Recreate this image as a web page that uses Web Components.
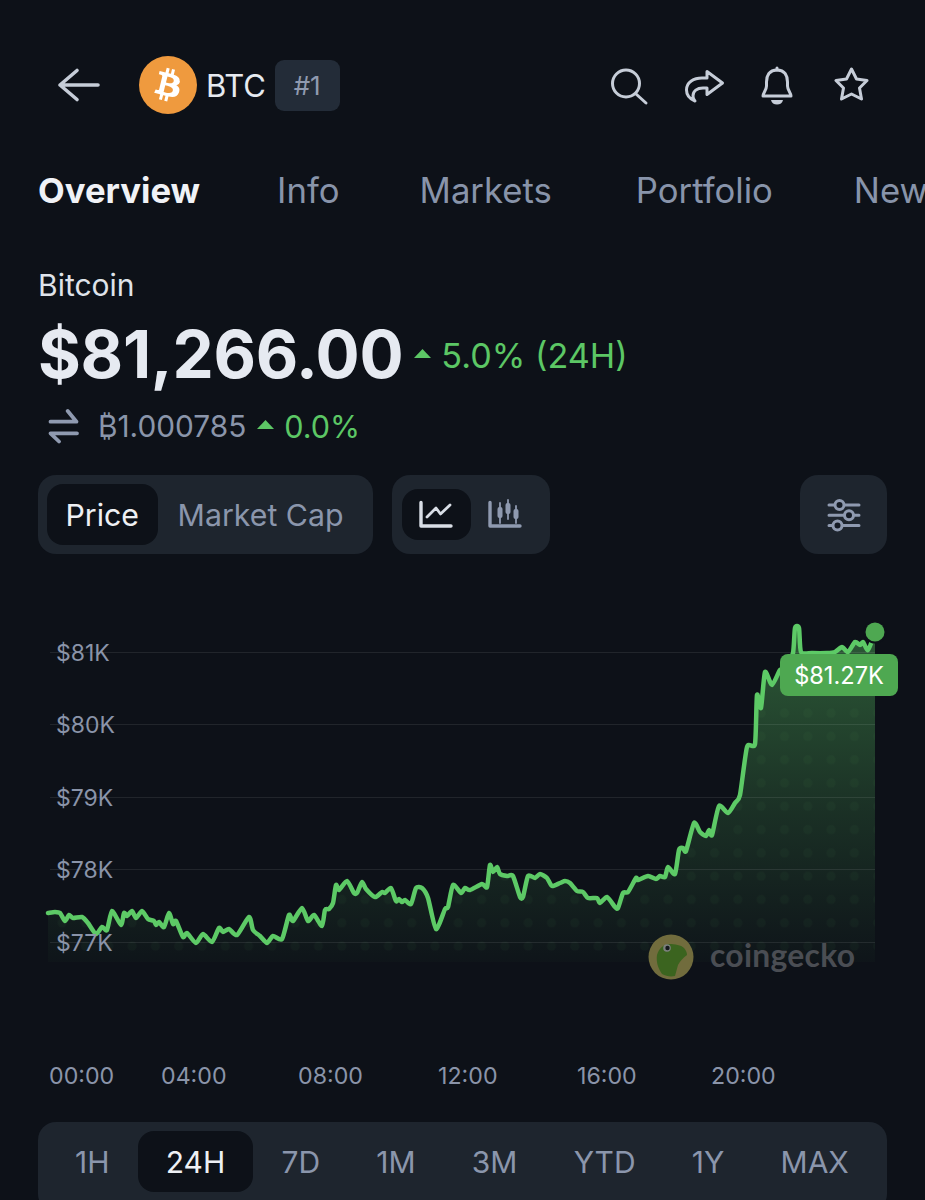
<!DOCTYPE html>
<html lang="en"><head><meta charset="utf-8"><title>BTC</title>
<style>
html,body{margin:0;padding:0;background:#0d1118;height:1200px;overflow:hidden}
body{font-family:Inter,"Liberation Sans",sans-serif;color:#e6eaf0}
</style></head><body>
<btc-page></btc-page>
<script>
const def=(name,html)=>{customElements.define(name,class extends HTMLElement{
  constructor(){super();this.attachShadow({mode:'open'}).innerHTML=html}
})};
def('coin-header',`<style>
:host{display:flex;align-items:center;height:60px;margin-top:55px;position:relative;box-sizing:border-box;font-family:Inter,"Liberation Sans",sans-serif}
svg{display:block;flex:none}
.st{stroke:#c6cdd8;fill:none;stroke-width:3;stroke-linecap:round;stroke-linejoin:round}
.sym{font-size:31px;color:#e6eaf0;margin-left:8px;letter-spacing:-.2px}
.rank{margin-left:9px;width:65px;height:51px;border-radius:9px;background:#232c38;color:#8f9ab0;font-size:26px;display:flex;align-items:center;justify-content:center}
.r{margin-left:auto;margin-right:55px;display:flex;align-items:center}
</style>
<svg style="margin-left:56px" width="46" height="36" viewBox="56 67 46 36"><path class="st" style="stroke-width:3.6" d="M98 85H60M77 70.5 60 85l17 14.5"/></svg>
<svg style="margin-left:36px" width="60" height="60" viewBox="0 0 60 60"><circle cx="30" cy="30" r="29" fill="#ef9a3e"/><g transform="translate(3.8 3.8) scale(.82)"><path fill="#fff" d="M46.1 27.4c.6-4.3-2.6-6.6-7.1-8.1l1.5-5.9-3.6-.9-1.4 5.7c-.9-.2-1.9-.5-2.9-.7l1.4-5.8-3.6-.9-1.5 5.9c-.8-.2-1.5-.3-2.2-.5l-5-1.2-.9 3.8s2.6.6 2.6.6c1.4.4 1.7 1.3 1.6 2l-1.6 6.6-2.3 9.3c-.2.4-.6 1-1.6.8 0 0-2.6-.7-2.6-.7l-1.8 4.1 4.7 1.2c.9.2 1.7.4 2.6.7l-1.5 6 3.6.9 1.5-5.9c1 .3 1.9.5 2.9.8l-1.5 5.9 3.6.9 1.5-6c6.2 1.2 10.9.7 12.8-4.9 1.6-4.5-.1-7.1-3.3-8.8 2.4-.5 4.2-2.1 4.6-5.3zM37.8 39c-1.1 4.5-8.7 2.1-11.2 1.4l2-8c2.5.6 10.4 1.9 9.2 6.6zm1.1-11.7c-1 4.1-7.3 2-9.4 1.5l1.8-7.3c2.1.5 8.7 1.5 7.6 5.8z"/></g></svg>
<span class="sym">BTC</span><span class="rank">#1</span>
<div class="r">
<svg width="44" height="44" viewBox="607 62 44 44"><circle class="st" cx="626" cy="82.5" r="13.5"/><path class="st" d="M636 93l10 9"/></svg>
<svg style="margin-left:31px" width="44" height="44" viewBox="682 62 44 44"><path class="st" d="M707 70.5 722.5 82 707 93.5V87h-4c-6 0-10 3-10 8 0 2 1 4 2 5-5-2-8.500-6-8.500-11 0-8 7.500-12 15.500-12h5z"/></svg>
<svg style="margin-left:34px" width="34" height="44" viewBox="760 62 34 44"><path class="st" d="M777 69c-8 0-10.500 6-10.500 12v4c0 4-3.500 7-3.500 10h28c0-3-3.500-6-3.500-10v-4c0-6-2.500-12-10.500-12z"/><path class="st" d="M777 67v2"/><path d="M771 99h12c-.5 3-3 4.500-6 4.500s-5.500-1.500-6-4.500z" fill="#c6cdd8"/></svg>
<svg style="margin-left:40px" width="36" height="44" viewBox="834 64 36 44"><path class="st" d="M851.500 70l5 10 10.500 1.500-7.500 7.500 2 11-10-5-10 5 2-11-7.500-7.500 10.500-1.500z"/></svg>
</div>`);
def('coin-tabs',`<style>
:host{display:flex;margin-top:46px;height:58px;align-items:center;overflow:hidden;padding-left:38px;font-size:34.700px;color:#8894aa;white-space:nowrap;font-family:Inter,"Liberation Sans",sans-serif}
b{color:#f0f2f6;font-weight:700;margin-right:77px;flex:none}
span{flex:none}
</style><b>Overview</b><span style="margin-right:80px">Info</span><span style="margin-right:84px">Markets</span><span style="margin-right:81px">Portfolio</span><span>News</span>`);
def('price-block',`<style>
:host{display:block;padding:0 0 0 38px;font-family:Inter,"Liberation Sans",sans-serif}
.name{font-size:30px;line-height:36px;margin-top:48px;color:#dfe3ea}
.row{display:flex;align-items:center}
.top{margin-top:15px}
.p{font-size:65.500px;font-weight:700;line-height:74px;color:#e6eaf1;letter-spacing:-.3px}
.g{color:#5cc765;font-size:34.200px}
.tri{display:block;flex:none}
.sub{margin-top:12px;height:44px}
.sub .v{color:#8a95aa;margin-left:19px;font-size:29.800px}
.sub .g{font-size:30.600px;margin-left:10px}
</style>
<div class="name">Bitcoin</div>
<div class="row top"><span class="p">$81,266.00</span>
<svg class="tri" style="margin:0 10px 3px 11px" width="17" height="9" viewBox="0 0 17 9"><path d="M8.500 0 17 9H0z" fill="#5cc765"/></svg><span class="g">5.0% (24H)</span></div>
<div class="row sub"><svg style="margin-left:10px" width="31" height="36" viewBox="47 408 31 36"><path d="M49.500 421.700H75.500L66.700 411M76 433.300H49.500L58 441.500" fill="none" stroke="#8f9ab0" stroke-width="3.800" stroke-linecap="round" stroke-linejoin="round"/></svg>
<span class="v">₿1.000785</span><svg class="tri" style="margin:0 0 3px 11px" width="17" height="9" viewBox="0 0 17 9"><path d="M8.500 0 17 9H0z" fill="#5cc765"/></svg><span class="g">0.0%</span></div>`);
def('seg-group',`<style>
:host{display:flex;align-items:center;height:79px;box-sizing:border-box;border-radius:18px;background:#1e252e;padding:0 9px}
</style><slot></slot>`);
def('seg-item',`<style>
:host{display:flex;align-items:center;justify-content:center;height:61px;border-radius:16px;color:#8b96ac;font-size:var(--f,30px);padding:0 20px;white-space:nowrap;font-family:Inter,"Liberation Sans",sans-serif}
:host([on]){background:#0d1118;color:#eef0f4}
</style><slot></slot>`);
def('chart-controls',`<style>
:host{display:flex;margin-top:27px;padding:0 38px;gap:19px;--f:30.300px;font-family:Inter,"Liberation Sans",sans-serif}
.ic{height:51px;width:69px;padding:0}
.pr{padding:0 19px 0 18.500px}
.mc{padding:0 20px 0 19.500px}
.g2{padding:0 10px}
.spacer{flex:1}
.m{width:87px;padding:0;justify-content:center}
svg{display:block}
</style>
<seg-group><seg-item on class="pr">Price</seg-item><seg-item class="mc">Market Cap</seg-item></seg-group>
<seg-group class="g2"><seg-item on class="ic"><svg width="40" height="36" viewBox="416 498 40 36"><path d="M421 503.500V527H451" fill="none" stroke="#d9dee6" stroke-width="3.400" stroke-linecap="round" stroke-linejoin="round"/><path d="M427 518 436 509 440.500 515 450 506" fill="none" stroke="#d9dee6" stroke-width="2.800" stroke-linecap="round" stroke-linejoin="round"/></svg></seg-item>
<seg-item class="ic"><svg width="40" height="36" viewBox="486 498 40 36"><path d="M491 503.500V527H521" fill="none" stroke="#8f9ab0" stroke-width="3.400" stroke-linecap="round" stroke-linejoin="round"/><path d="M501 504V524M509 501V520M517 507V524" stroke="#8f9ab0" stroke-width="1.800" stroke-linecap="round"/><rect x="498.500" y="508" width="5" height="11" rx="2" fill="#8f9ab0"/><rect x="506.500" y="504" width="5" height="11" rx="2" fill="#8f9ab0"/><rect x="514.500" y="510" width="5" height="10" rx="2" fill="#8f9ab0"/></svg></seg-item></seg-group>
<div class="spacer"></div>
<seg-group class="m"><svg width="36" height="36" viewBox="826 496 36 36"><g stroke="#8f9ab0" stroke-width="3" stroke-linecap="round" fill="#1e252e"><path d="M829 504H859M829 514.300H859M829 524.500H859"/><circle cx="839.500" cy="504" r="4.500" fill="#141a24"/><circle cx="849" cy="514.300" r="4.500" fill="#141a24"/><circle cx="837.500" cy="524.500" r="4.500" fill="#141a24"/></g></svg></seg-group>`);
const pts="48,913 55,912 60,913 65,921 69,915 73,918 82,917 88,923 96,934 102,927 107,930 112,911 121,925 124,913 127,916 132,911 136,918 142,911 148,919 154,921 156,925 159,922 164,927 169,913 173,924 176,921 183,937 187,933 196,943 203,934 212,942 219,928 223,932 229,929 237,935 249,917 253,930 260,936 267,943 273,936 282,939 289,915 293,921 302,908 308,921 314,915 322,926 325,910 329,909 333,903 336,885 339,890 347,881 354,893 357,893 362,882 366,889 375,897 382,892 385,893 391,888 396,901 399,899 402,902 405,900 411,904 416,888 422,888 428,898 436,929 445,909 448,907 453,885 461,893 465,888 470,890 482,884 487,887 490,865 493,872 497,867 500,874 507,876 513,876 520,897 523,897 528,876 535,878 540,874 547,878 552,886 560,883 565,881 570,883 577,891 583,892 588,898 597,898 600,903 607,897 615,907 618,908 623,893 628,892 636,878 638,880 648,876 656,879 660,876 665,877 668,867 675,874 679,850 683,848 686,851 694,823 700,832 706,836 709,830 712,835 719,806 728,813 735,803 740,795 747,747 755,744 757,695 761,708 765,672 772,685 780,670 786,668 793,653 795,628 799,628 801,652 812,653 827,653 835,652 842,647 848,652 855,642 860,645 863,642 868,650 875,633";
const P=pts.split(' ').map(s=>s.split(',').map(Number));
let smooth=`M${P[0][0]} ${P[0][1]}`;
for(let i=0;i<P.length-1;i++){const a=P[Math.max(i-1,0)],b=P[i],c=P[i+1],d=P[Math.min(i+2,P.length-1)],t=.11;
  smooth+=`C${(b[0]+(c[0]-a[0])*t).toFixed(1)} ${(b[1]+(c[1]-a[1])*t).toFixed(1)} ${(c[0]-(d[0]-b[0])*t).toFixed(1)} ${(c[1]-(d[1]-b[1])*t).toFixed(1)} ${c[0]} ${c[1]}`;}
const axis=[["$81K",652],["$80K",724],["$79K",797],["$78K",869],["$77K",942]];
const times=[["00:00",49],["04:00",161],["08:00",298],["12:00",438],["16:00",577],["20:00",711]];
def('price-chart',`<style>
:host{display:block;position:relative;height:522px;margin-top:46px;overflow:hidden;font-family:Inter,"Liberation Sans",sans-serif}
svg{position:absolute;left:0;top:0}
.y,.t{position:absolute;color:#8a94a9;white-space:nowrap}
.y{left:56px;font-size:23px;line-height:26px}
.t{font-size:23.200px;line-height:30px;top:461px;}
.tag{position:absolute;left:780px;top:54px;width:118px;height:42px;border-radius:8px;background:#4ea851;color:#fff;font-size:23.600px;display:flex;align-items:center;justify-content:center}
.wm{position:absolute;left:710px;top:336px;font:700 31.800px/38px Lato,"Open Sans",sans-serif;color:#4a4d53;letter-spacing:.3px}
</style>
<svg width="925" height="522" viewBox="0 600 925 522">
<defs>
<linearGradient id="gr" x1="0" y1="630" x2="0" y2="962" gradientUnits="userSpaceOnUse"><stop offset="0" stop-color="#5cc765" stop-opacity=".4"/><stop offset=".55" stop-color="#5cc765" stop-opacity=".17"/><stop offset="1" stop-color="#5cc765" stop-opacity=".02"/></linearGradient>
<pattern id="dots" x="4" y="2.500" width="23.300" height="23.300" patternUnits="userSpaceOnUse"><circle cx="11.600" cy="11.600" r="4.500" fill="#5cc765" fill-opacity=".04"/></pattern>
<clipPath id="c"><polygon points="48,962 ${pts} 875,962"/></clipPath>
</defs>
<polygon points="48,962 ${pts} 875,962" fill="url(#gr)"/>
<rect x="48" y="600" width="827" height="362" fill="url(#dots)" clip-path="url(#c)"/>
${axis.map(a=>`<path d="M50 ${a[1]+.5}H875" stroke="#fff" stroke-opacity=".085" stroke-width="1"/>`).join('')}
<path d="${smooth}" fill="none" stroke="#5dca66" stroke-width="4.500" stroke-linejoin="round" stroke-linecap="round"/>
<circle cx="875" cy="632" r="11.500" fill="#0d1118"/><circle cx="875" cy="632" r="9.500" fill="#4ea851"/>
<g transform="translate(671 957)"><circle r="22.500" fill="#716c3d"/><path d="M-14 -2C-12 -9 -8 -12 -2 -13C4 -13 10 -12 13 -9C15 -7 16 -4 16 -2C12 1 9 4 7 8C6 12 5 15 4 19C-1 20 -5 19 -9 17C-13 11 -15 5 -14 -2Z" fill="#3b641f"/><circle cx="-4" cy="-9" r="3.800" fill="#7d807e"/><circle cx="-3.500" cy="-9" r="2.200" fill="#15181c"/></g>
</svg>
${axis.map(a=>`<span class="y" style="top:${a[1]-600-12}px">${a[0]}</span>`).join('')}
${times.map(a=>`<span class="t" style="left:${a[1]}px">${a[0]}</span>`).join('')}
<div class="tag">$81.27K</div>
<span class="wm">coingecko</span>`);
def('range-bar',`<style>
:host{display:flex;margin:0 38px;height:90px;box-sizing:border-box;border-radius:18px;background:#1e252e;padding:9px;--f:30px;font-family:Inter,"Liberation Sans",sans-serif}
seg-item{padding:0 28.100px}
</style>
${["1H","24H","7D","1M","3M","YTD","1Y","MAX"].map(l=>`<seg-item ${l=="24H"?'on':''}>${l}</seg-item>`).join('')}`);
def('btc-page',`<style>:host{display:block;width:925px;height:1200px;overflow:hidden}</style>
<coin-header></coin-header><coin-tabs></coin-tabs><price-block></price-block><chart-controls></chart-controls><price-chart></price-chart><range-bar></range-bar>`);
</script></body></html>
